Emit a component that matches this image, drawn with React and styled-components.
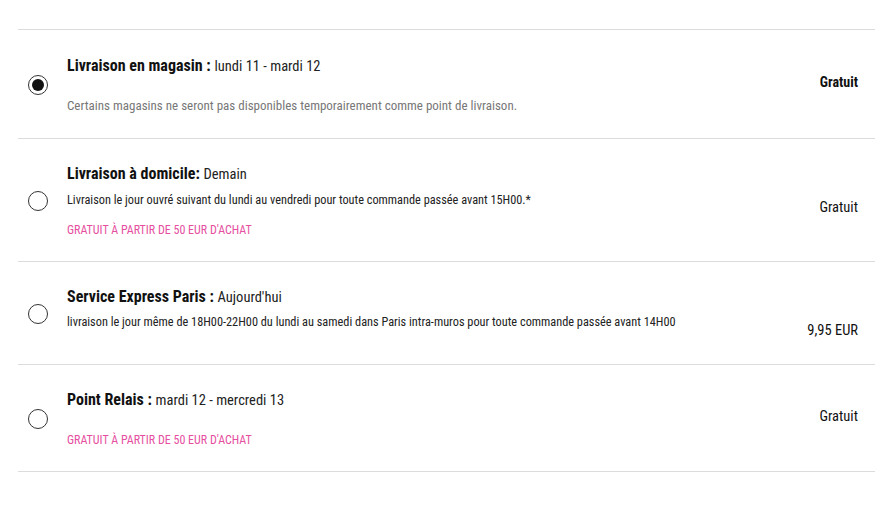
import React from "react";
import styled, { createGlobalStyle } from "styled-components";

const Global = createGlobalStyle`
  html, body { margin: 0; padding: 0; background: #fff; }
  body { font-family: "Roboto Condensed", "Roboto", sans-serif; font-stretch: condensed; }
`;

const Page = styled.div`
  padding: 29px 20px 0 18px;
`;

const List = styled.div`
  border-top: 1px solid #dcdcdc;
`;

const Row = styled.label`
  display: flex;
  align-items: flex-start;
  border-bottom: 1px solid #dcdcdc;
  padding: ${(p) => p.$pt || 25}px 17px ${(p) => p.$pb || 23}px 10px;
  cursor: pointer;
`;

const Radio = styled.span`
  flex: none;
  align-self: center;
  width: 20px;
  height: 20px;
  box-sizing: border-box;
  border-radius: 50%;
  border: 1.5px solid #333;
  display: flex;
  align-items: center;
  justify-content: center;
  margin-right: 19px;
  &::after {
    content: "";
    width: 12px;
    height: 12px;
    border-radius: 50%;
    background: #111;
    display: ${(p) => (p.$checked ? "block" : "none")};
  }
`;

const Body = styled.div`
  flex: 1;
  display: flex;
  flex-direction: column;
`;

const Title = styled.div`
  font-size: 16px;
  line-height: 20px;
  height: 20px;
  font-weight: 700;
  color: #111;
  white-space: nowrap;
`;

const DateText = styled.span`
  font-size: 14.5px;
  line-height: 1;
  font-weight: 400;
  color: #222;
`;

const Desc = styled.div`
  font-size: ${(p) => (p.$muted ? 13 : 12.3)}px;
  line-height: 16px;
  color: ${(p) => (p.$muted ? "#777" : "#222")};
  margin-top: ${(p) => p.$mt}px;
`;

const Promo = styled.div`
  font-size: 12px;
  line-height: 16px;
  color: #e64f9f;
  margin-top: ${(p) => p.$mt}px;
`;

const Price = styled.div`
  flex: none;
  font-size: ${(p) => (p.$bold ? 14 : 14.5)}px;
  line-height: 18px;
  font-weight: ${(p) => (p.$bold ? 700 : 400)};
  color: #111;
  margin-top: ${(p) => p.$top}px;
`;

const PROMO = "GRATUIT À PARTIR DE 50 EUR D'ACHAT";

export default function App() {
  return (
    <Page>
      <Global />
      <List>
        <Row $pt={26} $pb={24}>
          <Radio $checked />
          <Body>
            <Title>
              Livraison en magasin : <DateText>lundi 11 - mardi 12</DateText>
            </Title>
            <Desc $muted $mt={22}>
              Certains magasins ne seront pas disponibles temporairement comme point de livraison.
            </Desc>
          </Body>
          <Price $bold $top={17}>Gratuit</Price>
        </Row>
        <Row>
          <Radio />
          <Body>
            <Title>
              Livraison à domicile: <DateText>Demain</DateText>
            </Title>
            <Desc $mt={8}>
              Livraison le jour ouvré suivant du lundi au vendredi pour toute commande passée avant 15H00.*
            </Desc>
            <Promo $mt={14}>{PROMO}</Promo>
          </Body>
          <Price $top={35}>Gratuit</Price>
        </Row>
        <Row $pb={24}>
          <Radio />
          <Body>
            <Title>
              Service Express Paris : <DateText>Aujourd'hui</DateText>
            </Title>
            <Desc $mt={7}>
              livraison le jour même de 18H00-22H00 du lundi au samedi dans Paris intra-muros pour toute commande passée avant 14H00
            </Desc>
          </Body>
          <Price $top={35}>9,95 EUR</Price>
        </Row>
        <Row>
          <Radio />
          <Body>
            <Title>
              Point Relais : <DateText>mardi 12 - mercredi 13</DateText>
            </Title>
            <Promo $mt={22}>{PROMO}</Promo>
          </Body>
          <Price $top={18}>Gratuit</Price>
        </Row>
      </List>
    </Page>
  );
}
